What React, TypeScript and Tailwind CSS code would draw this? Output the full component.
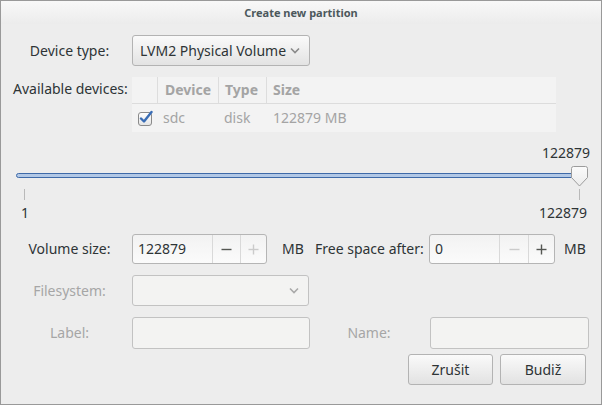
import React from "react";

function Chevron({ color }: { color: string }) {
  return (
    <svg width="10" height="7" viewBox="0 0 10 7">
      <polyline points="1,1.5 5,5.5 9,1.5" fill="none" stroke={color} strokeWidth="1.6" />
    </svg>
  );
}

function Minus({ color }: { color: string }) {
  return (
    <svg width="11" height="11" viewBox="0 0 11 11">
      <line x1="0.5" y1="5.5" x2="10.5" y2="5.5" stroke={color} strokeWidth="1.4" />
    </svg>
  );
}

function Plus({ color }: { color: string }) {
  return (
    <svg width="11" height="11" viewBox="0 0 11 11">
      <line x1="0.5" y1="5.5" x2="10.5" y2="5.5" stroke={color} strokeWidth="1.4" />
      <line x1="5.5" y1="0.5" x2="5.5" y2="10.5" stroke={color} strokeWidth="1.4" />
    </svg>
  );
}

function CheckBox() {
  return (
    <svg width="16" height="16" viewBox="0 0 16 16">
      <defs>
        <linearGradient id="cbg" x1="0" y1="0" x2="0" y2="1">
          <stop offset="0" stopColor="#ffffff" />
          <stop offset="1" stopColor="#e4e4e4" />
        </linearGradient>
      </defs>
      <rect x="1.5" y="2.5" width="13" height="13" rx="2.5" fill="url(#cbg)" stroke="#8a8a8a" strokeWidth="1" />
      <path d="M4 8.5 L7 11.5 L14.5 2" fill="none" stroke="#3a6db5" strokeWidth="2.4" strokeLinecap="round" strokeLinejoin="round" />
    </svg>
  );
}

function Handle() {
  return (
    <svg width="17" height="21" viewBox="0 0 17 21">
      <defs>
        <linearGradient id="hg" x1="0" y1="0" x2="0" y2="1">
          <stop offset="0" stopColor="#fbfbfb" />
          <stop offset="1" stopColor="#ececec" />
        </linearGradient>
      </defs>
      <path d="M2.5 0.5 H14.5 Q16.5 0.5 16.5 2.5 V11.5 L8.5 20 L0.5 11.5 V2.5 Q0.5 0.5 2.5 0.5 Z" fill="url(#hg)" stroke="#9c9c9c" strokeWidth="1" />
    </svg>
  );
}

export default function App() {
  return (
    <div className="w-[602px] h-[405px] border border-[#999999] bg-[#ededed] flex flex-col overflow-hidden font-['Noto_Sans',sans-serif] text-[14px] text-[#2e3436]">
      {/* title bar */}
      <div className="h-[23px] shrink-0 flex items-center justify-center bg-gradient-to-b from-[#f8f8f8] to-[#ececec]">
        <span className="text-[11px] font-bold text-[#4c585c] leading-[16px]">Create new partition</span>
      </div>

      {/* content */}
      <div className="flex flex-col pl-[12px]">
        {/* Device type */}
        <div className="flex items-center mt-[11px] h-[31px]">
          <div className="w-[113px] text-center leading-[20px]">Device type:</div>
          <div className="ml-[6px] w-[178px] h-[31px] rounded-[3px] border border-[#b3b3b3] bg-gradient-to-b from-[#fafafa] to-[#e3e3e3] flex items-center justify-between pl-[7px] pr-[9px]">
            <span className="leading-[20px] whitespace-nowrap">LVM2 Physical Volume</span>
            <Chevron color="#8a8a8a" />
          </div>
        </div>

        {/* Available devices */}
        <div className="flex items-start mt-[11px]">
          <div className="w-[113px] text-center leading-[20px] pt-[2px] whitespace-nowrap">Available devices:</div>
          <div className="ml-[6px] w-[424px] h-[55px] bg-[#f3f3f3] flex flex-col">
            <div className="h-[27px] flex border-b border-[#dcdcdc] font-bold text-[#a4a4a4] leading-[20px]">
              <div className="w-[26px] border-r border-[#dddddd]"></div>
              <div className="w-[61px] border-r border-[#dddddd] pl-[7px] flex items-center">Device</div>
              <div className="w-[48px] border-r border-[#dddddd] pl-[6px] flex items-center">Type</div>
              <div className="flex-1 pl-[6px] flex items-center">Size</div>
            </div>
            <div className="flex-1 flex items-center text-[#a4a4a4] leading-[20px]">
              <div className="w-[26px] pl-[5px] flex items-center">
                <CheckBox />
              </div>
              <div className="w-[61px] pl-[5px]">sdc</div>
              <div className="w-[48px] pl-[5px]">disk</div>
              <div className="flex-1 pl-[6px]">122879 MB</div>
            </div>
          </div>
        </div>
      </div>

      {/* slider */}
      <div className="flex flex-col pl-[15px] pr-[11px] mt-[11px]">
        <div className="text-right leading-[20px]">122879</div>
        <div className="relative h-[25px]">
          <div className="absolute left-0 top-[10px] w-[562px] h-[5px] rounded-full border border-[#3f6aa8] bg-[#b2c8e6]"></div>
          <div className="absolute left-[555px] top-[3px]">
            <Handle />
          </div>
        </div>
        <div className="h-[12px] flex justify-between pl-[8px] pr-[10px]">
          <div className="w-px h-[11px] mt-[1px] bg-[#b9b9b9]"></div>
          <div className="w-px h-[11px] mt-[1px] bg-[#b9b9b9]"></div>
        </div>
        <div className="flex justify-between leading-[20px] mt-[3px] pl-[5px] pr-[3px]">
          <span>1</span>
          <span>122879</span>
        </div>
      </div>

      <div className="flex flex-col pl-[12px]">
        {/* Volume size row */}
        <div className="flex items-center mt-[11px] h-[30px]">
          <div className="w-[113px] text-center leading-[20px]">Volume size:</div>
          <div className="ml-[6px] h-[30px] flex rounded-[3px] border border-[#b5b5b5] bg-gradient-to-b from-[#f2f2f2] to-[#fbfbfb]">
            <div className="w-[79px] pl-[5px] flex items-center leading-[20px]">122879</div>
            <div className="w-[28px] border-l border-[#d9d9d9] flex items-center justify-center">
              <Minus color="#555753" />
            </div>
            <div className="w-[26px] border-l border-[#d9d9d9] flex items-center justify-center">
              <Plus color="#cbcbcb" />
            </div>
          </div>
          <div className="ml-[15px] w-[22px] leading-[20px]">MB</div>
          <div className="ml-[11px] w-[108px] leading-[20px] whitespace-nowrap">Free space after:</div>
          <div className="ml-[6px] h-[30px] flex rounded-[3px] border border-[#b5b5b5] bg-gradient-to-b from-[#f2f2f2] to-[#fbfbfb]">
            <div className="w-[69px] pl-[5px] flex items-center leading-[20px]">0</div>
            <div className="w-[29px] border-l border-[#d9d9d9] flex items-center justify-center">
              <Minus color="#cbcbcb" />
            </div>
            <div className="w-[26px] border-l border-[#d9d9d9] flex items-center justify-center">
              <Plus color="#555753" />
            </div>
          </div>
          <div className="ml-[9px] leading-[20px]">MB</div>
        </div>

        {/* Filesystem row */}
        <div className="flex items-center mt-[11px] h-[31px]">
          <div className="w-[113px] text-center leading-[20px] text-[#a6a6a6]">Filesystem:</div>
          <div className="ml-[6px] w-[177px] h-[31px] rounded-[3px] border border-[#c2c2c2] bg-[#f3f3f2] flex items-center justify-end pr-[9px]">
            <Chevron color="#a9a9a9" />
          </div>
        </div>

        {/* Label row */}
        <div className="flex items-center mt-[11px] h-[32px]">
          <div className="w-[113px] text-center leading-[20px] text-[#a6a6a6]">Label:</div>
          <div className="ml-[6px] w-[178px] h-[32px] rounded-[3px] border border-[#c2c2c2] bg-[#f3f3f2]"></div>
          <div className="ml-[5px] w-[108px] text-center leading-[20px] text-[#a6a6a6]">Name:</div>
          <div className="ml-[7px] w-[159px] h-[32px] rounded-[3px] border border-[#c2c2c2] bg-[#f3f3f2]"></div>
        </div>
      </div>

      {/* buttons */}
      <div className="flex justify-end gap-[7px] pr-[15px] mt-[5px]">
        <button className="w-[85px] h-[31px] rounded-[3px] border border-[#b3b3b3] bg-gradient-to-b from-[#fafafa] to-[#e2e2e2] leading-[20px] text-[#2e3436]">
          Zrušit
        </button>
        <button className="w-[86px] h-[31px] rounded-[3px] border border-[#b3b3b3] bg-gradient-to-b from-[#fafafa] to-[#e2e2e2] leading-[20px] text-[#2e3436]">
          Budiž
        </button>
      </div>
    </div>
  );
}
